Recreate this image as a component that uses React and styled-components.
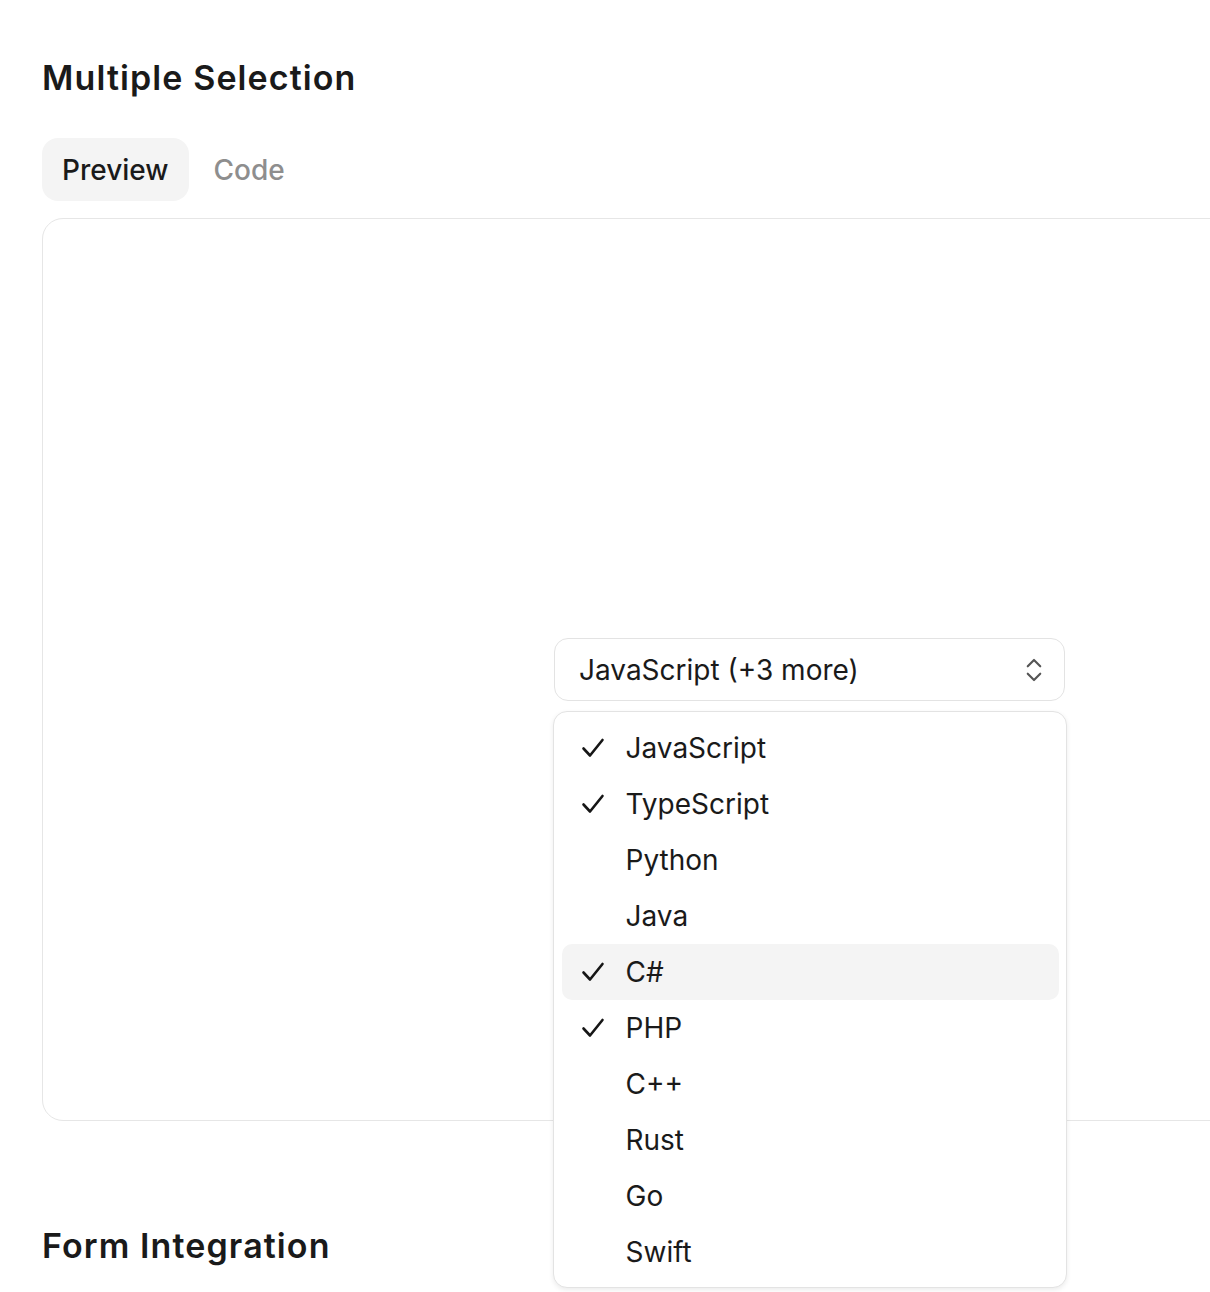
import React from 'react';
import styled, { createGlobalStyle } from 'styled-components';
import { ChevronsUpDown } from 'lucide-react';

const languages = [
  { name: 'JavaScript', checked: true },
  { name: 'TypeScript', checked: true },
  { name: 'Python' },
  { name: 'Java' },
  { name: 'C#', checked: true, active: true },
  { name: 'PHP', checked: true },
  { name: 'C++' },
  { name: 'Rust' },
  { name: 'Go' },
  { name: 'Swift' },
];

const CheckMark = () => (
  <svg width="24" height="22" viewBox="0 0 24 22" fill="none">
    <polyline points="2.5,11.5 9,18.5 21.5,3" stroke="#161616" strokeWidth="2.6" strokeLinecap="round" strokeLinejoin="round" />
  </svg>
);

const App = () => (
  <>
    <GlobalStyle />
    <Page>
      <Heading>Multiple Selection</Heading>
      <Tabs>
        <Tab active>Preview</Tab>
        <Tab>Code</Tab>
      </Tabs>
      <Panel>
        <SelectWrap>
          <Trigger>
            <span>JavaScript (+3 more)</span>
            <ChevronsUpDown size={30} strokeWidth={1.7} color="#555555" />
          </Trigger>
          <Menu>
            {languages.map(lang => (
              <Item key={lang.name} active={lang.active}>
                <CheckSlot>{lang.checked && <CheckMark />}</CheckSlot>
                <span>{lang.name}</span>
              </Item>
            ))}
          </Menu>
        </SelectWrap>
      </Panel>
      <Heading second>Form Integration</Heading>
    </Page>
  </>
);

const GlobalStyle = createGlobalStyle`
  html, body {
    margin: 0;
    background: #ffffff;
    overflow-x: hidden;
  }
  body {
    font-family: Inter, "Noto Sans", sans-serif;
    color: #1a1a1a;
  }
  * {
    box-sizing: border-box;
  }
`;

const Page = styled.div`
  padding: 57px 0 40px 42px;
  width: 1620px;
`;

const Heading = styled.h2`
  margin: ${p => (p.second ? '104px 0 0' : '0')};
  font-size: 34px;
  line-height: 42px;
  font-weight: 600;
  letter-spacing: 1.1px;
  color: #1a1a1a;
`;

const Tabs = styled.div`
  display: flex;
  gap: 5px;
  margin-top: 39px;
`;

const Tab = styled.div`
  height: 63px;
  padding: 0 20px;
  display: flex;
  align-items: center;
  border-radius: 16px;
  font-size: 28px;
  font-weight: 500;
  background: ${p => (p.active ? '#f4f4f4' : 'transparent')};
  color: ${p => (p.active ? '#1a1a1a' : '#8e8e8e')};
`;

const Panel = styled.div`
  margin-top: 17px;
  width: 1535px;
  height: 903px;
  border: 1.5px solid #e6e6e6;
  border-radius: 21px;
  display: flex;
  align-items: center;
  justify-content: center;
`;

const SelectWrap = styled.div`
  position: relative;
`;

const Trigger = styled.div`
  width: 511px;
  height: 63px;
  border: 1.5px solid #e3e3e3;
  border-radius: 14px;
  padding: 0 15px 0 24px;
  display: flex;
  align-items: center;
  justify-content: space-between;
  font-size: 28px;
  color: #1a1a1a;
`;

const Menu = styled.div`
  position: absolute;
  top: 73px;
  left: -1px;
  width: 514px;
  padding: 7.5px;
  background: #ffffff;
  border: 1.5px solid #e3e3e3;
  border-radius: 14px;
  box-shadow: 0 2px 5px rgba(0, 0, 0, 0.08);
  z-index: 10;
`;

const Item = styled.div`
  height: 56px;
  display: flex;
  align-items: center;
  padding: 1px 0 0 19px;
  border-radius: 10px;
  font-size: 28px;
  color: #1a1a1a;
  background: ${p => (p.active ? '#f4f4f4' : 'transparent')};
`;

const CheckSlot = styled.span`
  width: 24px;
  height: 22px;
  margin-right: 21px;
  display: flex;
  align-items: center;
  svg {
    display: block;
  }
`;

export default App;
